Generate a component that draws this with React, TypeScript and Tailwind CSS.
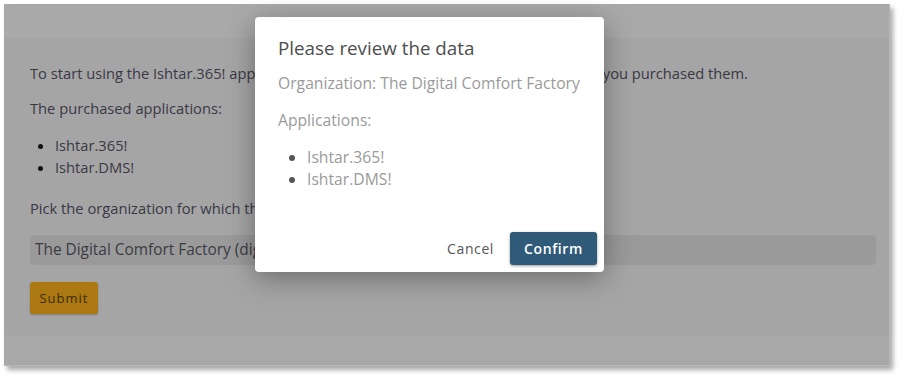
import React from "react";

export default function App() {
  const font = { fontFamily: '"Open Sans", "Noto Sans", sans-serif' };
  return (
    <div className="w-[904px] h-[380px] bg-white overflow-hidden" style={font}>
      <div className="relative ml-[4px] mt-[4px] w-[886px] h-[362px] bg-[#a6a6a6] border-r border-b border-[#b8b8b8] shadow-[3px_4px_5px_rgba(0,0,0,0.35)] flex flex-col">
        <div className="h-[34px] bg-[#a9a9a9]" />
        <div className="flex-1 px-[26px] pt-[24px] text-[14.7px] leading-[22px] text-[#3a3845] bg-[#a5a5a5]">
          <p className="whitespace-nowrap">
            To start using the Ishtar.365! applications, please select your organization for which you purchased them.
          </p>
          <p className="mt-[13px]">The purchased applications:</p>
          <ul className="mt-[15px] list-disc pl-[25px] marker:text-[#111]">
            <li>Ishtar.365!</li>
            <li>Ishtar.DMS!</li>
          </ul>
          <p className="mt-[19px]">Pick the organization for which the applications were purchased:</p>
          <div className="mt-[16px] h-[30px] w-[846px] rounded-[4px] bg-[#9a9a9a] flex items-center px-[5px] text-[15.4px] text-[#3a3a44]">
            The Digital Comfort Factory (digitalcomfortfactory.onmicrosoft.com)
          </div>
          <div className="mt-[17px] w-[68px] h-[32px] rounded-[3px] bg-[#ab7811] shadow-[0_1px_2px_rgba(0,0,0,0.25)] flex items-center justify-center text-[13px] tracking-[1px] text-[#3b2c0c]">
            Submit
          </div>
        </div>
        <div className="h-[30px] bg-[#a8a8a8]" />

        <div className="absolute left-[251px] top-[13px] w-[349px] h-[255px] bg-white rounded-[4px] shadow-[0_6px_28px_rgba(0,0,0,0.35)] flex flex-col">
          <div className="px-[23px] pt-[19px] flex-1">
            <h2 className="text-[18.8px] leading-[24px] text-[#4d4d4d]">Please review the data</h2>
            <p className="mt-[12px] text-[15.7px] leading-[22px] text-[#9a9a9a] whitespace-nowrap">
              Organization: The Digital Comfort Factory
            </p>
            <p className="mt-[15px] text-[15.7px] leading-[22px] text-[#9a9a9a]">Applications:</p>
            <ul className="mt-[15px] list-disc pl-[29px] text-[15.7px] leading-[22px] text-[#9a9a9a] marker:text-[#555]">
              <li>Ishtar.365!</li>
              <li>Ishtar.DMS!</li>
            </ul>
          </div>
          <div className="flex justify-end items-center gap-[14px] px-[7px] pb-[7px]">
            <span className="text-[14px] tracking-[0.6px] text-[#555] px-[2px]">Cancel</span>
            <div className="w-[87px] h-[33px] rounded-[3px] bg-[#2f5a78] shadow-[0_1px_3px_rgba(0,0,0,0.4)] flex items-center justify-center text-[14px] font-semibold tracking-[0.6px] text-white">
              Confirm
            </div>
          </div>
        </div>
      </div>
    </div>
  );
}
